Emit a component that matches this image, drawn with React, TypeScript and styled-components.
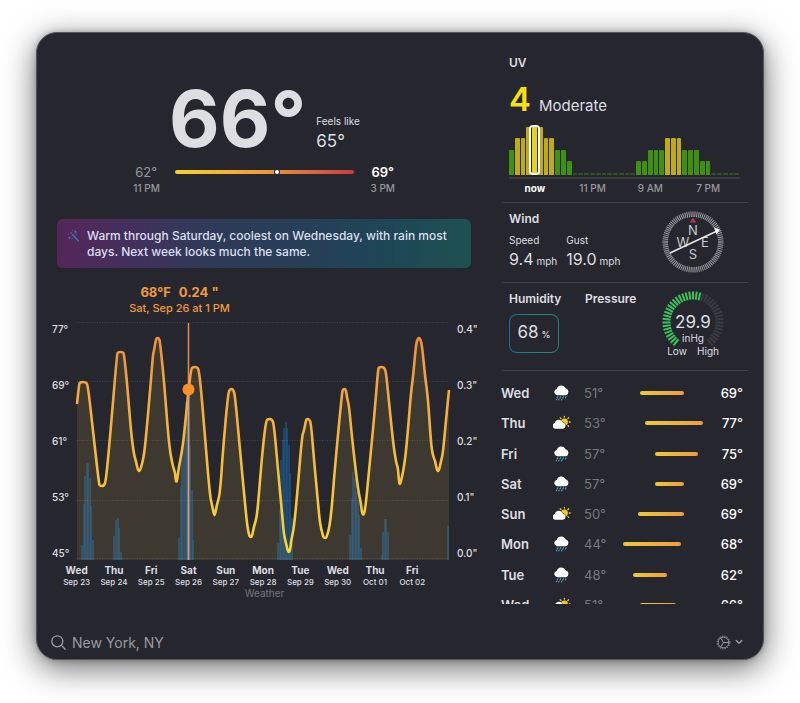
import React from 'react';
import styled, { createGlobalStyle, css } from 'styled-components';

const GlobalStyle = createGlobalStyle`
  * { box-sizing: border-box; }
  body {
    margin: 0;
    background: #fff;
    font-family: Inter, "Liberation Sans", sans-serif;
    -webkit-font-smoothing: antialiased;
  }
  button, input { font: inherit; color: inherit; }
  h2, p, dl, dd, ul { margin: 0; padding: 0; }
`;

const Page = styled.div`
  padding: 32px 36px 44px;
`;

const Window = styled.main`
  display: flex;
  flex-direction: column;
  background: #26272e;
  border: 1px solid #55565b;
  border-radius: 21px;
  padding: 0 15px;
  color: #dedee2;
  box-shadow: 0 8px 32px rgba(0, 0, 0, 0.58), 0 0 6px rgba(0, 0, 0, 0.25);
`;

const Columns = styled.div`
  display: grid;
  grid-template-columns: minmax(0, 1fr) 247px;
  column-gap: 24px;
`;

const Column = styled.section<{ $top: number }>`
  display: flex;
  flex-direction: column;
  min-width: 0;
  padding-top: ${(p) => p.$top}px;
`;

/* ---------- current conditions ---------- */

const Hero = styled.div`
  display: flex;
  justify-content: center;
  align-items: flex-end;
  gap: 10px;
`;

const BigTemp = styled.div`
  font-size: 78px;
  line-height: 80px;
  font-weight: 700;
`;

const FeelsLike = styled.div`
  font-size: 10px;
  line-height: 20px;
  padding-bottom: 8px;
  white-space: nowrap;
`;

const FeelsValue = styled.div`
  font-size: 17px;
`;

const RangeRow = styled.div`
  display: flex;
  justify-content: center;
  gap: 16px;
  margin-top: 5px;
`;

const RangeEnd = styled.div<{ $bright?: boolean }>`
  width: 26px;
  text-align: center;
  white-space: nowrap;
  font-size: 13px;
  line-height: 16px;
  font-weight: ${(p) => (p.$bright ? 600 : 400)};
  color: ${(p) => (p.$bright ? '#fff' : '#97979c')};
`;

const RangeTime = styled.div`
  font-size: 10px;
  font-weight: 500;
  color: #97979c;
`;

const RangeTrack = styled.div`
  position: relative;
  width: 42%;
  height: 4px;
  margin-top: 6px;
  border-radius: 2px;
  background: linear-gradient(90deg, #f6d32b, #f0993b 50%, #c93b41);
`;

const RangeDot = styled.span`
  position: absolute;
  left: 56%;
  top: 0;
  width: 4px;
  height: 4px;
  border-radius: 2px;
  background: #fff;
  box-shadow: 0 0 0 1px #26272e;
`;

const Banner = styled.div`
  display: flex;
  gap: 6px;
  margin: 23px 6px 0 5px;
  padding: 9px 8px 8px 10px;
  border-radius: 6px;
  background: linear-gradient(90deg, #55265a 0%, #42305c 18%, #2f3a58 36%, #263f58 60%, #1d4656 80%, #1f5150 100%);
  color: #dcdfee;
  font-size: 12px;
  line-height: 16px;
  font-weight: 500;
`;

const WandIcon = styled.svg`
  flex: none;
  margin-top: 1px;
`;

/* ---------- chart ---------- */

const Callout = styled.div`
  width: 60%;
  margin-top: 16px;
  text-align: center;
  color: #f09a3c;
  font-size: 11px;
  line-height: 16px;
  font-weight: 500;
`;

const CalloutValues = styled.div`
  display: flex;
  justify-content: center;
  gap: 8px;
  font-size: 13px;
  font-weight: 700;
`;

const ChartGrid = styled.div`
  display: grid;
  grid-template-columns: 25px minmax(0, 1fr) 28px;
  margin-top: 6px;
`;

const Axis = styled.div<{ $inset?: number }>`
  display: flex;
  flex-direction: column;
  justify-content: space-between;
  padding-left: ${(p) => p.$inset || 0}px;
  font-size: 10px;
  line-height: 14px;
  font-weight: 500;
`;

const Plot = styled.svg`
  display: block;
  width: 100%;
  height: auto;
  overflow: visible;
`;

const Days = styled.div`
  display: flex;
  margin-top: 3px;
  padding: 0 46px 0 6px;
`;

const Day = styled.div`
  flex: 1;
  text-align: center;
  white-space: nowrap;
  font-size: 10px;
  line-height: 14px;
  font-weight: 700;
`;

const DayDate = styled.div`
  margin: -1px -4px 0;
  font-size: 8px;
  line-height: 12px;
  font-weight: 500;
`;

const Source = styled.a`
  align-self: center;
  font-size: 10px;
  line-height: 11px;
  color: #75757b;
  text-decoration: none;
`;

/* ---------- right column ---------- */

const Panel = styled.section<{ $height?: number }>`
  margin-left: 1px;
  padding: 8px 8px 0 7px;
  border-bottom: 1px solid #404144;
  ${(p) => p.$height && css`min-height: ${p.$height}px;`}
`;

const PanelTitle = styled.h2`
  font-size: 12px;
  line-height: 16px;
  font-weight: 600;
`;

const UvReading = styled.div`
  display: flex;
  align-items: baseline;
  gap: 8px;
  margin-top: 10px;
  font-size: 15px;
  line-height: 36px;
`;

const UvValue = styled.strong`
  font-size: 33px;
  font-weight: 600;
  color: #f8e00f;
`;

const UvBars = styled.div`
  display: flex;
  align-items: flex-end;
  height: 52px;
  margin-top: 3px;
  padding-bottom: 2px;
  border-bottom: 2px solid #3a3b41;
`;

const levelHeights = [2, 14, 25, 37, 48];
const levelColors = ['#2f5220', '#41900f', '#41900f', '#bfab13', '#bfab13'];

const UvBar = styled.div<{ $level: number; $now?: boolean }>`
  position: relative;
  flex: 1;
  height: ${(p) => levelHeights[p.$level]}px;
  margin-right: 1px;
  border-radius: 1px 1px 0 0;
  background: ${(p) => (p.$now ? '#e6d416' : levelColors[p.$level])};
  ${(p) =>
    p.$now &&
    css`
      z-index: 1;
      &::after {
        content: '';
        position: absolute;
        inset: -2px -3px 0;
        border: 2px solid #fff;
        border-radius: 4px;
      }
    `}
`;

const UvTimes = styled.div`
  display: grid;
  grid-template-columns: repeat(4, 1fr);
  margin: 2px 3px 0 -3px;
  padding-bottom: 7px;
`;

const UvTime = styled.span<{ $now?: boolean }>`
  text-align: center;
  font-size: 10px;
  line-height: 14px;
  font-weight: ${(p) => (p.$now ? 700 : 500)};
  color: ${(p) => (p.$now ? '#fff' : '#98989d')};
`;

const Split = styled.div`
  display: flex;
  justify-content: space-between;
`;

const WindReadings = styled.dl`
  display: flex;
  gap: 9px;
  margin-top: 6px;
  white-space: nowrap;
  font-size: 10px;
  line-height: 14px;
`;

const Reading = styled.dd`
  font-size: 16px;
  line-height: 24px;
`;

const Unit = styled.span`
  margin-left: 3px;
  font-size: 10px;
`;

const Dial = styled.svg`
  flex: none;
  margin-right: 16px;
  font-family: Inter, sans-serif;
`;

const Pair = styled.div`
  display: flex;
`;

const Metric = styled.div`
  width: 76px;
`;

const HumidityBox = styled.div`
  display: inline-flex;
  align-items: baseline;
  justify-content: center;
  width: 50px;
  margin-top: 7px;
  border: 1px solid transparent;
  border-radius: 8px;
  background: linear-gradient(#26272e, #26272e) padding-box, linear-gradient(90deg, #1c6a9c, #1f8a78 60%, #22826c) border-box;
  font-size: 17px;
  line-height: 35px;
`;

const Percent = styled.span`
  margin-left: 3px;
  font-size: 9px;
  font-weight: 500;
`;

const Forecast = styled.div`
  height: 226px;
  margin-top: 7px;
  overflow: hidden;
`;

const ForecastTable = styled.table`
  width: 100%;
  height: 242px;
  border-collapse: collapse;
  table-layout: fixed;
  font-size: 13px;
  line-height: 16px;
  font-weight: 500;

  td, th { padding: 0; text-align: left; }
`;

const DayCell = styled.th`
  width: 52px;
  font-weight: 600;
`;

const IconCell = styled.td`
  width: 31px;
`;

const LowCell = styled.td`
  width: 39px;
  font-weight: 400;
  color: #77787d;
`;

const HighCell = styled.td`
  && { text-align: right; padding-right: 5px; }
  color: #fff;
`;

const TrackCell = styled.td`
  width: 80px;
`;

const Bar = styled.div`
  height: 4px;
  border-radius: 2px;
  background: linear-gradient(90deg, #eccb33, #ee9c43);
`;

const WeatherSvg = styled.svg`
  display: block;
`;

/* ---------- footer ---------- */

const Footer = styled.footer`
  display: flex;
  align-items: center;
  justify-content: space-between;
  padding: 26px 5px 5px 0;
  color: #9b9ba0;
`;

const Search = styled.label`
  display: flex;
  align-items: center;
  gap: 6px;
  margin-left: -1px;
`;

const SearchInput = styled.input`
  width: 200px;
  height: 24px;
  padding: 0;
  border: 0;
  outline: 0;
  background: none;
  font-size: 14px;
`;

const SettingsButton = styled.button`
  display: flex;
  align-items: center;
  gap: 4px;
  padding: 0;
  border: 0;
  background: none;
`;

/* ---------- data ---------- */

const temperature: [number, number][] = [
  [77, 404], [79, 385], [80, 382], [86, 382], [88, 386], [93, 431], [99, 484], [100, 486], [104, 486], [106, 480], [110, 438],
  [117, 354], [118, 352], [123, 352], [124, 354], [127, 382], [131, 432], [134, 455], [136, 461], [138, 471], [140, 471], [142, 464], [144, 455], [146, 437],
  [151, 380], [153, 354], [154, 351], [156, 339], [157, 338], [159, 338], [160, 342], [164, 380], [169, 446], [173, 467], [175, 472], [176, 482], [177, 481], [179, 466],
  [183, 446], [187, 405], [191, 369], [193, 367], [197, 367], [199, 370], [202, 400], [206, 450], [210, 496], [212, 505], [214, 515], [215, 515], [217, 504], [220, 494],
  [223, 450], [228, 394], [230, 389], [233, 389], [235, 395], [240, 450], [244, 493], [247, 524], [249, 535], [250, 537], [252, 537], [254, 526], [257, 517],
  [260, 480], [263, 446], [266, 421], [268, 419], [272, 419], [274, 425], [278, 470], [282, 513], [284, 535], [286, 543], [288, 552], [290, 552], [291, 541], [294, 528],
  [298, 485], [302, 436], [304, 431], [306, 420], [307, 419], [309, 419], [311, 423], [314, 460], [318, 503], [320, 524], [323, 536], [324, 538], [327, 538], [331, 518],
  [335, 466], [342, 393], [343, 389], [346, 389], [347, 398], [349, 405], [352, 438], [358, 490], [361, 503], [362, 514], [364, 515], [366, 503], [369, 470],
  [374, 420], [378, 370], [379, 367], [384, 367], [386, 372], [388, 392], [393, 442], [396, 462], [398, 468], [399, 482], [400, 485], [402, 477], [405, 461],
  [408, 430], [411, 392], [413, 378], [416, 344], [418, 338], [420, 338], [422, 345], [425, 376], [428, 398], [431, 444], [433, 456], [435, 460], [437, 471], [439, 471], [441, 461],
  [443, 453], [446, 420], [449, 390],
];

const smoothPath = (pts: [number, number][]) => {
  let d = `M${pts[0][0]} ${pts[0][1]}`;
  for (let i = 1; i < pts.length - 1; i++) {
    const [x, y] = pts[i];
    const [nx, ny] = pts[i + 1];
    d += `Q${x} ${y} ${(x + nx) / 2} ${(y + ny) / 2}`;
  }
  const last = pts[pts.length - 1];
  return `${d}L${last[0]} ${last[1]}`;
};

const rain: [number, number][] = [
  [82, 545], [84, 504], [85, 476], [87, 463], [88, 463], [90, 478], [91, 506], [93, 540],
  [114, 536], [116, 520], [118, 518], [119, 528], [121, 552],
  [179, 538], [181, 487], [182, 450], [184, 430], [186, 402], [187, 394], [189, 394], [190, 445], [192, 490], [193, 540],
  [278, 543], [280, 510], [281, 460], [283, 440], [284, 428], [286, 422], [287, 428], [289, 445], [290, 473], [292, 518],
  [350, 535], [352, 498], [353, 472], [355, 478], [356, 492], [358, 500], [359, 515], [361, 548],
  [382, 555], [383, 532], [385, 519], [386, 519], [388, 532],
  [448, 526],
];

const uv = [2, 3, 3, 4, 4, 4, 3, 3, 2, 2, 1, ...Array(11).fill(0), 1, 1, 2, 2, 2, 3, 3, 3, 2, 2, 2, 1, 1, ...Array(5).fill(0)];

const days = [
  ['Wed', 'Sep 23'], ['Thu', 'Sep 24'], ['Fri', 'Sep 25'], ['Sat', 'Sep 26'], ['Sun', 'Sep 27'],
  ['Mon', 'Sep 28'], ['Tue', 'Sep 29'], ['Wed', 'Sep 30'], ['Thu', 'Oct 01'], ['Fri', 'Oct 02'],
];

const forecast: { day: string; sky: 'rain' | 'sun'; low: number; high: number }[] = [
  { day: 'Wed', sky: 'rain', low: 51, high: 69 },
  { day: 'Thu', sky: 'sun', low: 53, high: 77 },
  { day: 'Fri', sky: 'rain', low: 57, high: 75 },
  { day: 'Sat', sky: 'rain', low: 57, high: 69 },
  { day: 'Sun', sky: 'sun', low: 50, high: 69 },
  { day: 'Mon', sky: 'rain', low: 44, high: 68 },
  { day: 'Tue', sky: 'rain', low: 48, high: 62 },
  { day: 'Wed', sky: 'sun', low: 51, high: 66 },
];

const LOW = 44;
const HIGH = 77;

/* ---------- drawings ---------- */

function RainIcon() {
  return (
    <WeatherSvg width="20" height="18" viewBox="0 0 20 18" role="img" aria-label="Rain">
      <path d="M4.200 11.300a3.200 3.200 0 0 1-.4-6.300A4.700 4.700 0 0 1 12.600 4.200 3.700 3.700 0 0 1 13 11.300Z" fill="#fff" />
      <g stroke="#4fa9c9" strokeWidth="1.100" strokeLinecap="round">
        <path d="M4.800 12.800l-.7 1.300M7.600 12.800l-.7 1.300M10.400 12.800l-.7 1.300M13 12.800l-.6 1.100M6 15.400l-.3.500M8.900 15.200l-.4.800M3.600 15.400l-.2.300" />
      </g>
    </WeatherSvg>
  );
}

function SunIcon() {
  return (
    <WeatherSvg width="20" height="18" viewBox="0 0 20 18" role="img" aria-label="Partly cloudy">
      <circle cx="11.400" cy="8" r="3.500" fill="#f7cb1d" />
      <g stroke="#f7cb1d" strokeWidth="1.300" strokeLinecap="round">
        <path d="M11.400 2.300v.8M15.600 3.800l-.7.700M17.200 8h-.8M15.600 12.200l-.6-.6M7.200 3.800l.7.700" />
      </g>
      <path d="M2.200 14.700a2.900 2.900 0 0 1-.3-5.700A4.100 4.100 0 0 1 9.700 8.400 3.200 3.200 0 0 1 10 14.700Z" fill="#fff" stroke="#26272e" strokeWidth=".8" paintOrder="stroke" />
    </WeatherSvg>
  );
}

function Compass() {
  const ticks = Array.from({ length: 90 }, (_, i) => i * 4);
  return (
    <Dial width="62" height="62" viewBox="-31 -31 62 62" role="img" aria-label="Wind from west-southwest">
      {ticks.map((a) => (
        <line key={a} y1="-30.500" y2="-25" stroke="#a0a0a4" strokeWidth="1" transform={`rotate(${a})`} />
      ))}
      <path d="M-3.500-19.500L0-24.500 3.500-19.500Z" fill="#b3324a" />
      <g fill="#c9c9cd" fontSize="13" textAnchor="middle">
        <text x="0" y="-7">N</text>
        <text x="-10" y="5">W</text>
        <text x="12" y="5">E</text>
        <text x="0" y="17">S</text>
      </g>
      <path d="M-23 11L24-11" stroke="#e8e8ea" strokeWidth="1.500" />
      <path d="M21-14.500L27-12.500 23.500-7.500Z" fill="#f2f2f4" />
    </Dial>
  );
}

function PressureGauge() {
  const count = 41;
  return (
    <Dial width="62" height="68" viewBox="-31 -31 62 68" role="img" aria-label="Pressure 29.9 inches of mercury">
      {Array.from({ length: count }, (_, i) => {
        const a = -140 + (i * 280) / (count - 1);
        return (
          <line key={i} y1="-30.500" y2="-22.500" strokeWidth="2" stroke={a < 18 ? '#38c65c' : '#3b3c43'} transform={`rotate(${a})`} />
        );
      })}
      <g fill="#dedee2" textAnchor="middle">
        <text y="6" fontSize="17">29.9</text>
        <text y="20" fontSize="10">inHg</text>
        <text x="-16" y="33" fontSize="10">Low</text>
        <text x="15" y="33" fontSize="10">High</text>
      </g>
    </Dial>
  );
}

function TemperaturePlot() {
  const line = smoothPath(temperature);
  return (
    <Plot viewBox="77 322 372 238" role="img" aria-label="Hourly temperature and precipitation">
      <defs>
        <linearGradient id="heat" gradientUnits="userSpaceOnUse" x1="0" y1="335" x2="0" y2="555">
          <stop offset="0" stopColor="#ee8f3f" />
          <stop offset=".3" stopColor="#f4ab3c" />
          <stop offset="1" stopColor="#f9d82c" />
        </linearGradient>
      </defs>
      {rain.map(([x, y], i) => (
        <rect key={i} x={x - 0.6} y={y} width="1.300" height={560 - y} fill="#1d578a" />
      ))}
      <path d={`${line}V560H77Z`} fill="#e6b23e" fillOpacity=".12" />
      {[323, 382, 441, 501, 559].map((y) => (
        <path key={y} d={`M77 ${y - 0.5}H449`} stroke="#fff" strokeOpacity=".13" strokeDasharray="1 1.500" />
      ))}
      <path d="M188.500 323V560" stroke="#e08f49" strokeWidth="1.500" />
      <path d={line} fill="none" stroke="url(#heat)" strokeWidth="2.600" strokeLinejoin="round" />
      <path d="M188.500 394V560" stroke="#c89a90" strokeWidth="1.500" />
      <circle cx="188.500" cy="389.500" r="6" fill="#fb9026" />
    </Plot>
  );
}

export default function App() {
  return (
    <>
      <GlobalStyle />
      <Page>
        <Window>
          <Columns>
            <Column $top={46}>
              <Hero>
                <BigTemp>66°</BigTemp>
                <FeelsLike>
                  Feels like
                  <FeelsValue>65°</FeelsValue>
                </FeelsLike>
              </Hero>
              <RangeRow>
                <RangeEnd>
                  62°<RangeTime>11 PM</RangeTime>
                </RangeEnd>
                <RangeTrack>
                  <RangeDot />
                </RangeTrack>
                <RangeEnd $bright>
                  69°<RangeTime>3 PM</RangeTime>
                </RangeEnd>
              </RangeRow>
              <Banner>
                <WandIcon width="14" height="14" viewBox="0 0 14 14" aria-hidden="true">
                  <g stroke="#4673bd" strokeWidth="1.300" strokeLinecap="round">
                    <path d="M5.500 5.500L11.500 12M4 4l.3.300" />
                    <path d="M8.500 2v1.800M7.600 2.900h1.800M2.500 8v1.600M1.700 8.800h1.600M1.200 5.500h.2M5.500 1.300h.2M5 9.500v.2M9.500 5.800h.2" strokeWidth=".9" />
                  </g>
                </WandIcon>
                <p>Warm through Saturday, coolest on Wednesday, with rain most days. Next week looks much the same.</p>
              </Banner>
              <Callout>
                <CalloutValues>
                  <span>68°F</span>
                  <span>0.24 "</span>
                </CalloutValues>
                Sat, Sep 26 at 1 PM
              </Callout>
              <ChartGrid>
                <Axis>
                  {['77°', '69°', '61°', '53°', '45°'].map((t) => (
                    <span key={t}>{t}</span>
                  ))}
                </Axis>
                <TemperaturePlot />
                <Axis $inset={8}>
                  {['0.4"', '0.3"', '0.2"', '0.1"', '0.0"'].map((t) => (
                    <span key={t}>{t}</span>
                  ))}
                </Axis>
              </ChartGrid>
              <Days>
                {days.map(([name, date]) => (
                  <Day key={date}>
                    {name}
                    <DayDate>{date}</DayDate>
                  </Day>
                ))}
              </Days>
              <Source href="#weather">Weather</Source>
            </Column>

            <Column $top={14}>
              <Panel>
                <PanelTitle>UV</PanelTitle>
                <UvReading>
                  <UvValue>4</UvValue>Moderate
                </UvReading>
                <UvBars>
                  {uv.map((level, i) => (
                    <UvBar key={i} $level={level} $now={i === 4} />
                  ))}
                </UvBars>
                <UvTimes>
                  <UvTime $now>now</UvTime>
                  <UvTime>11 PM</UvTime>
                  <UvTime>9 AM</UvTime>
                  <UvTime>7 PM</UvTime>
                </UvTimes>
              </Panel>
              <Panel $height={80}>
                <Split>
                  <div>
                    <PanelTitle>Wind</PanelTitle>
                    <WindReadings>
                      <div>
                        <dt>Speed</dt>
                        <Reading>9.4<Unit>mph</Unit></Reading>
                      </div>
                      <div>
                        <dt>Gust</dt>
                        <Reading>19.0<Unit>mph</Unit></Reading>
                      </div>
                    </WindReadings>
                  </div>
                  <Compass />
                </Split>
              </Panel>
              <Panel $height={88}>
                <Split>
                  <Pair>
                    <Metric>
                      <PanelTitle>Humidity</PanelTitle>
                      <HumidityBox>
                        68<Percent>%</Percent>
                      </HumidityBox>
                    </Metric>
                    <PanelTitle>Pressure</PanelTitle>
                  </Pair>
                  <PressureGauge />
                </Split>
              </Panel>
              <Forecast>
                <ForecastTable>
                  <tbody>
                    {forecast.map((f, i) => (
                      <tr key={i}>
                        <DayCell scope="row">{f.day}</DayCell>
                        <IconCell>{f.sky === 'rain' ? <RainIcon /> : <SunIcon />}</IconCell>
                        <LowCell>{f.low}°</LowCell>
                        <TrackCell>
                          <Bar
                            style={{
                              marginLeft: `${((f.low - LOW) / (HIGH - LOW)) * 100}%`,
                              width: `${((f.high - f.low) / (HIGH - LOW)) * 100}%`,
                            }}
                          />
                        </TrackCell>
                        <HighCell>{f.high}°</HighCell>
                      </tr>
                    ))}
                  </tbody>
                </ForecastTable>
              </Forecast>
            </Column>
          </Columns>
          <Footer>
            <Search>
              <svg width="15" height="15" viewBox="0 0 15 15" fill="none" stroke="currentColor" strokeWidth="1.300" strokeLinecap="round" aria-hidden="true">
                <circle cx="6.300" cy="6.300" r="5.500" />
                <path d="M10.400 10.400L14.200 14.200" />
              </svg>
              <SearchInput type="text" aria-label="Location" defaultValue="New York, NY" />
            </Search>
            <SettingsButton type="button" aria-label="Settings">
              <svg width="15" height="15" viewBox="0 0 15 15" fill="none" stroke="currentColor" aria-hidden="true">
                <circle cx="7.500" cy="7.500" r="5.400" />
                <circle cx="7.500" cy="7.500" r="6.400" strokeDasharray="1.200 1.310" />
                <path d="M7.500 7.500H13M7.500 7.500L4.700 2.800M7.500 7.500L4.700 12.200" />
              </svg>
              <svg width="8" height="6" viewBox="0 0 8 6" fill="none" stroke="currentColor" strokeWidth="1.400" strokeLinecap="round" strokeLinejoin="round" aria-hidden="true">
                <path d="M1.200 1.500L4 4.300 6.800 1.500" />
              </svg>
            </SettingsButton>
          </Footer>
        </Window>
      </Page>
    </>
  );
}
